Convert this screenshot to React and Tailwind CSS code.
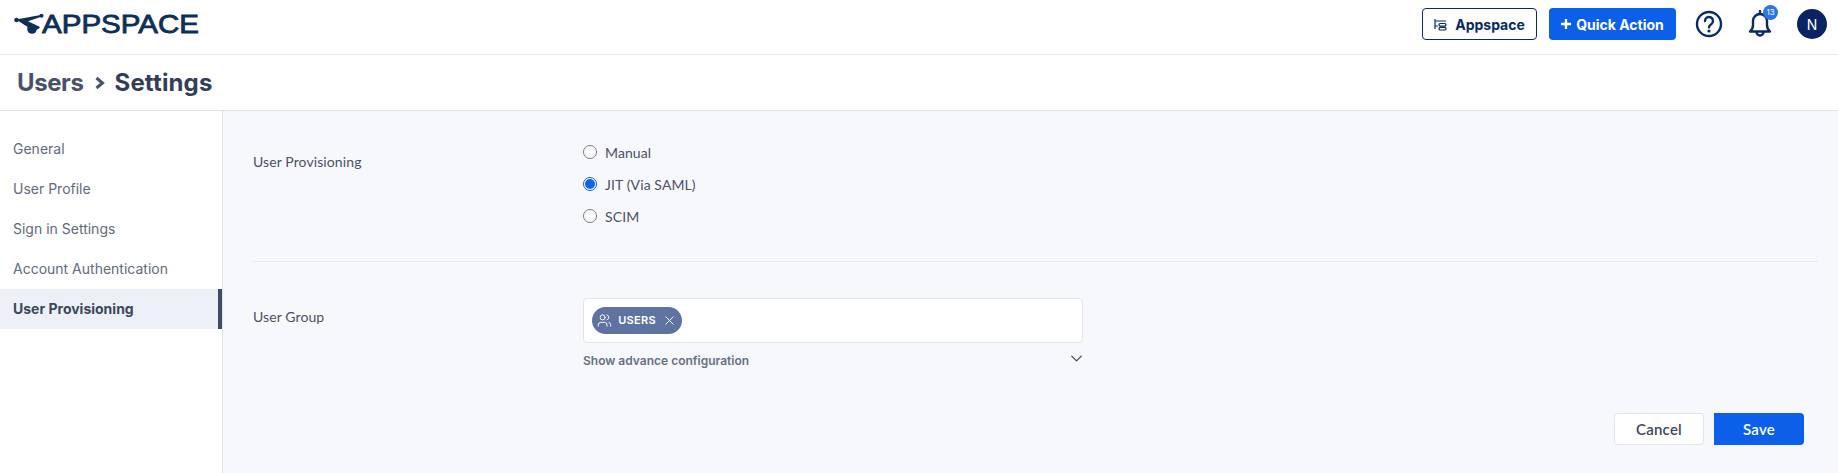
import React from "react";
import { Users, X, ChevronDown } from "lucide-react";

const sideItems = ["General", "User Profile", "Sign in Settings", "Account Authentication", "User Provisioning"];

const Logo = () => (
  <svg width="190" height="30" viewBox="0 0 190 30" className="block">
    {/* pointer mark */}
    <path d="M2 10.5 L28 5.8 L28 7.6 L14 12.2 L26 18 L25 19.5 L20 22 Z" fill="#0f2f56" />
    <circle cx="2.5" cy="11" r="2.3" fill="#0f2f56" />
    <circle cx="27.5" cy="6.7" r="2" fill="#0f2f56" />
    <circle cx="18" cy="20" r="4.8" fill="#0f2f56" />
    <text
      x="28"
      y="24"
      textLength="157"
      lengthAdjust="spacingAndGlyphs"
      fontFamily="'Liberation Sans', sans-serif"
      fontSize="25"
      fontWeight="400"
      stroke="#0f2f56"
      strokeWidth="0.8"
      fill="#0f2f56"
    >
      APPSPACE
    </text>
  </svg>
);

const Radio = ({ label, checked }) => (
  <label className="flex items-center h-8 gap-2">
    <span
      className={
        checked
          ? "w-[14px] h-[14px] rounded-full border border-[#0b5fe8] bg-white flex items-center justify-center"
          : "w-[14px] h-[14px] rounded-full border border-[#77797e] bg-white"
      }
    >
      {checked && <span className="w-[10px] h-[10px] rounded-full bg-[#0b66f0]" />}
    </span>
    <span className="text-[14px] tracking-[0.1px] text-[#4b5166]">{label}</span>
  </label>
);

export default function App() {
  return (
    <div className="h-screen flex flex-col bg-white font-['Lato',sans-serif] overflow-hidden">
      {/* Top header */}
      <header className="h-[55px] shrink-0 flex items-center justify-between border-b border-[#e8e9ec] pl-[14px] pr-[11px] pb-[6px]">
        <Logo />
        <div className="flex items-center">
          <button className="w-[115px] h-8 flex items-center justify-center gap-[8px] rounded border border-[#0a2a66] text-[#0a2a66] text-[14px] font-['Inter',sans-serif] font-bold">
            <svg width="13" height="13" viewBox="0 0 13 13" fill="none" stroke="#0a2a66" strokeWidth="1.2">
              <path d="M1 1v10M1 3h11M1 8h3" />
              <rect x="5" y="5.5" width="7" height="2.6" rx="1.3" />
              <rect x="5" y="9.4" width="7" height="2.6" rx="1.3" />
            </svg>
            Appspace
          </button>
          <button className="ml-3 w-[127px] h-8 flex items-center justify-center gap-[5px] rounded bg-[#0b5fe8] text-white text-[14px] font-['Inter',sans-serif] font-bold">
            <svg width="10" height="10" viewBox="0 0 10 10" stroke="white" strokeWidth="2.4">
              <path d="M5 0v10M0 5h10" />
            </svg>
            Quick Action
          </button>
          <svg width="28" height="28" viewBox="0 0 28 28" fill="none" className="ml-[19px]">
            <circle cx="14" cy="14" r="12" stroke="#0a2a66" strokeWidth="2.4" />
            <path d="M10 11a4 4 0 1 1 6.2 3.3c-1.4.9-2.2 1.6-2.2 3" stroke="#0a2a66" strokeWidth="2.4" strokeLinecap="round" />
            <circle cx="14" cy="21" r="1.6" fill="#0a2a66" />
          </svg>
          <div className="relative ml-[24px] w-[26px] h-[28px]">
            <svg width="26" height="28" viewBox="0 0 26 28" fill="none" stroke="#0a2a66" strokeWidth="2.4">
              <path d="M13 1v3" strokeLinecap="round" />
              <path d="M3 21.5c2-1.5 3-3.5 3-6.5v-4a7 7 0 0 1 14 0v4c0 3 1 5 3 6.5Z" strokeLinejoin="round" />
              <path d="M9.5 22a3.5 3.5 0 0 0 7 0" />
            </svg>
            <span className="absolute -top-[5px] -right-[5px] w-[15px] h-[15px] rounded-full bg-[#2a74e8] text-white text-[8px] leading-[15px] text-center font-['Inter',sans-serif]">
              13
            </span>
          </div>
          <div className="ml-[24px] w-[30px] h-[30px] rounded-full bg-[#0a2463] text-white text-[14px] flex items-center justify-center font-['Inter',sans-serif]">
            N
          </div>
        </div>
      </header>

      {/* Breadcrumb */}
      <div className="h-[56px] shrink-0 flex items-center border-b border-[#dfe3e9] pl-[17px] font-['Inter',sans-serif] text-[24px] font-bold">
        <span className="text-[#4a5269] tracking-[-0.4px]">Users</span>
        <svg width="10" height="14" viewBox="0 0 10 14" fill="none" stroke="#4a5269" strokeWidth="3" className="ml-[11px] mr-[10px]">
          <path d="M1.5 2l6 5-6 5" />
        </svg>
        <span className="text-[#353e58] tracking-[0.15px]">Settings</span>
      </div>

      <div className="flex flex-1 min-h-0">
        {/* Sidebar */}
        <aside className="w-[223px] shrink-0 border-r border-[#dfe3e9] pt-[18px] font-['Inter',sans-serif] text-[14px]">
          {sideItems.map((item) =>
            item === "User Provisioning" ? (
              <div key={item} className="h-10 flex items-center pl-[13px] pb-[2px] bg-[#edf1f7] border-r-4 border-[#414c68] font-bold text-[#3d465c]">
                {item}
              </div>
            ) : (
              <div key={item} className="h-10 flex items-center pl-[13px] pb-[2px] text-[#626a7c]">
                {item}
              </div>
            )
          )}
        </aside>

        {/* Main */}
        <main className="flex-1 bg-[#f7f8fb] pl-[30px] pr-[20px] pt-[21px]">
          <div className="flex h-[130px] border-b border-[#e9ebef]">
            <div className="w-[330px] text-[14px] tracking-[0.1px] text-[#4b5166] pt-[19px]">User Provisioning</div>
            <div className="flex flex-col pt-[4px]">
              <Radio label="Manual" />
              <Radio label="JIT (Via SAML)" checked />
              <Radio label="SCIM" />
            </div>
          </div>

          <div className="flex pt-[36px]">
            <div className="w-[330px] text-[14px] tracking-[0.1px] text-[#4b5166] pt-[8px]">User Group</div>
            <div className="w-[500px]">
              <div className="h-[45px] flex items-center pl-2 bg-white border border-[#e1e4ec] rounded">
                <span className="h-[27px] w-[90px] flex items-center justify-center gap-[6px] rounded-full bg-[#5f73a3] text-white text-[11px] tracking-[0.3px] font-['Inter',sans-serif] font-semibold">
                  <Users size={15} strokeWidth={1.5} />
                  USERS
                  <X size={15} strokeWidth={1.5} />
                </span>
              </div>
              <div className="mt-[9px] flex justify-between font-['Inter',sans-serif] text-[12px] font-semibold text-[#667085]">
                <span>Show advance configuration</span>
                <ChevronDown size={19} strokeWidth={1.75} className="text-[#414c68] -mt-[3px] -mr-[3px]" />
              </div>
            </div>
          </div>

          <div className="flex justify-end gap-[10px] mt-[43px] pr-[14px] text-[15px] tracking-[0.2px] font-semibold">
            <button className="w-[90px] h-8 bg-white border border-[#e1e4ec] rounded-sm text-[#3d465c]">Cancel</button>
            <button className="w-[90px] h-8 bg-[#0b5fe8] rounded-r text-white">Save</button>
          </div>
        </main>
      </div>
    </div>
  );
}
